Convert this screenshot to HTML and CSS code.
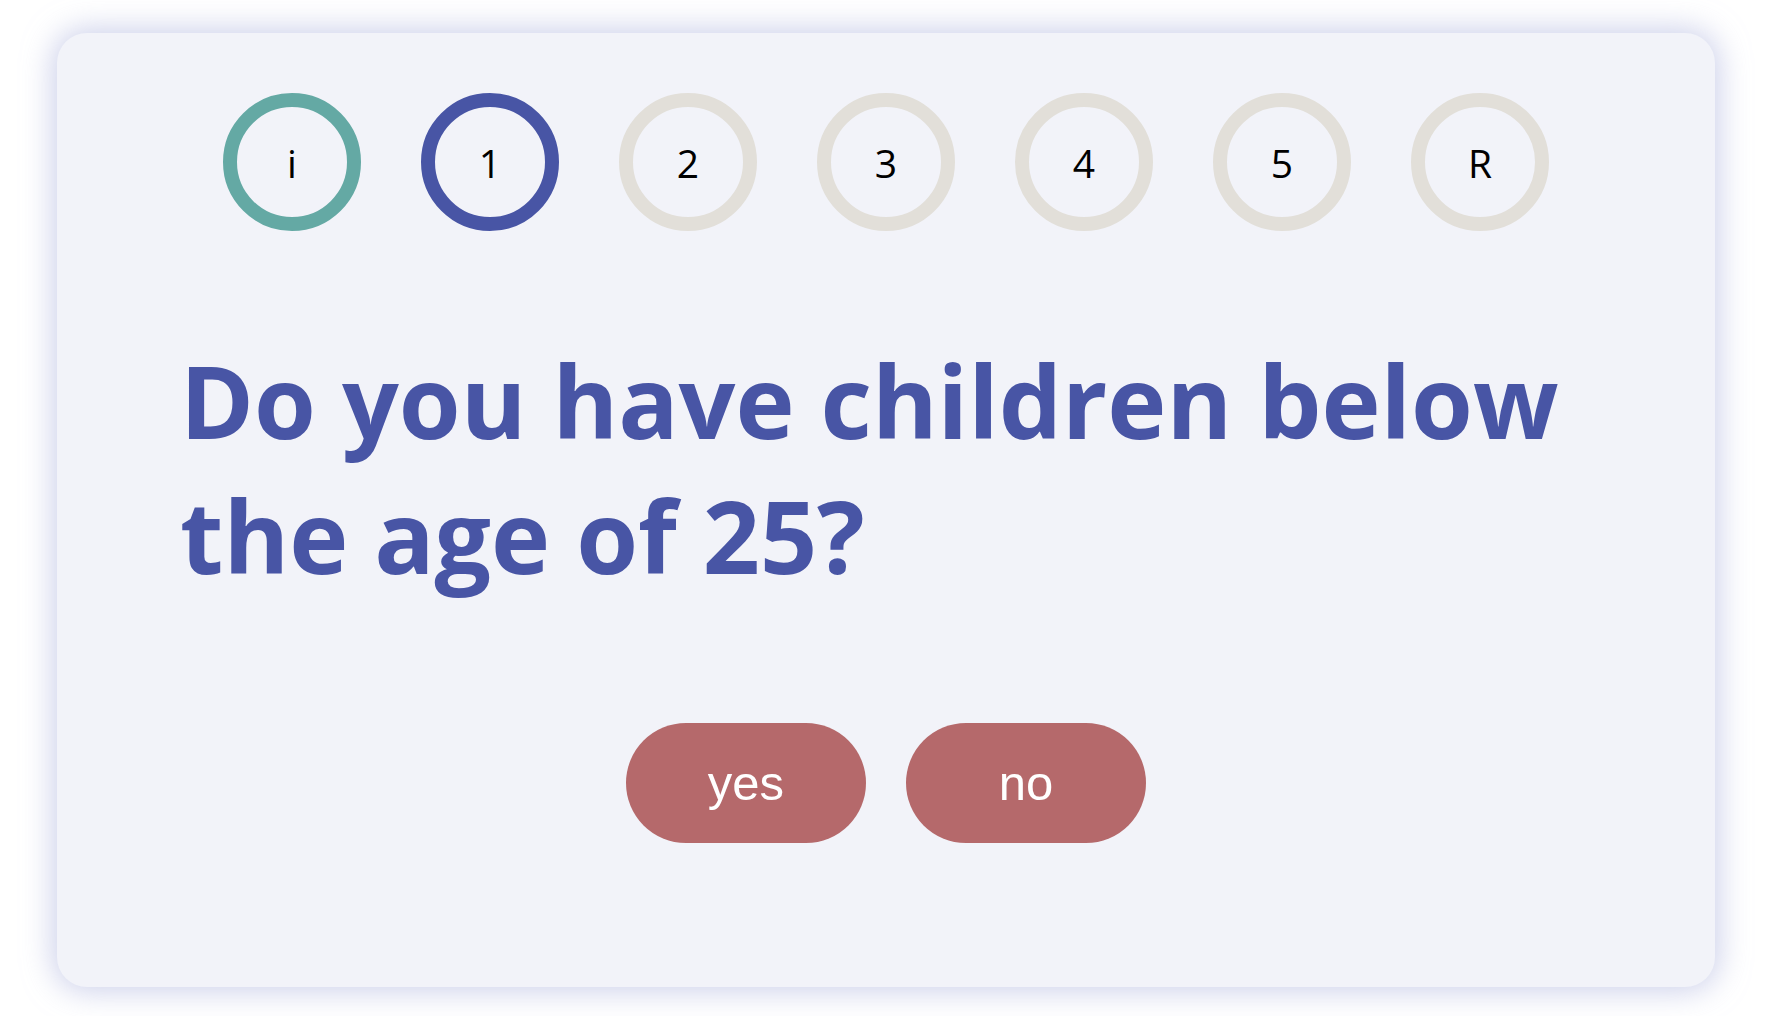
FILE: index.html
```html
<!DOCTYPE html>
<html lang="en">
<head>
<meta charset="utf-8">
<title>Question</title>
<link rel="stylesheet" href="styles.css">
</head>
<body>
<main class="card">
  <nav class="steps">
    <div class="step step-done">i</div>
    <div class="step step-current">1</div>
    <div class="step">2</div>
    <div class="step">3</div>
    <div class="step">4</div>
    <div class="step">5</div>
    <div class="step">R</div>
  </nav>
  <h1 class="question">Do you have children below the age of 25?</h1>
  <div class="answers">
    <button class="answer">yes</button>
    <button class="answer">no</button>
  </div>
</main>
</body>
</html>
```
FILE: styles.css
```css
html, body {
  margin: 0;
  padding: 0;
  background: #ffffff;
}
body {
  width: 1776px;
  height: 1016px;
  overflow: hidden;
}
.card {
  box-sizing: border-box;
  width: 1658px;
  height: 954px;
  margin: 33px 0 0 57px;
  background: #f2f3f9;
  border-radius: 30px;
  box-shadow: 0 0 30px 4px rgba(170, 176, 220, 0.6);
  padding: 60px 0 0 0;
  display: flex;
  flex-direction: column;
}
.steps {
  display: flex;
  justify-content: center;
  gap: 60px;
}
.step {
  box-sizing: border-box;
  width: 138px;
  height: 138px;
  border-radius: 50%;
  border: 14px solid #e2dfd9;
  display: flex;
  align-items: center;
  justify-content: center;
  font-family: "Open Sans", sans-serif;
  font-size: 39px;
  color: #000;
}
.step-done { border-color: #64a9a4; }
.step-current { border-color: #4855a5; }
.question {
  margin: 102px 0 0 0;
  padding: 0 120px 0 123px;
  font-family: "Open Sans", sans-serif;
  font-weight: 700;
  font-size: 100px;
  line-height: 135px;
  color: #4855a5;
}
.answers {
  display: flex;
  justify-content: center;
  gap: 40px;
  margin-top: 120px;
}
.answer {
  width: 240px;
  height: 120px;
  border: none;
  border-radius: 60px;
  background: #b5696b;
  color: #ffffff;
  font-family: "Liberation Sans", Arial, sans-serif;
  font-size: 49px;
  padding: 0;
}
```
